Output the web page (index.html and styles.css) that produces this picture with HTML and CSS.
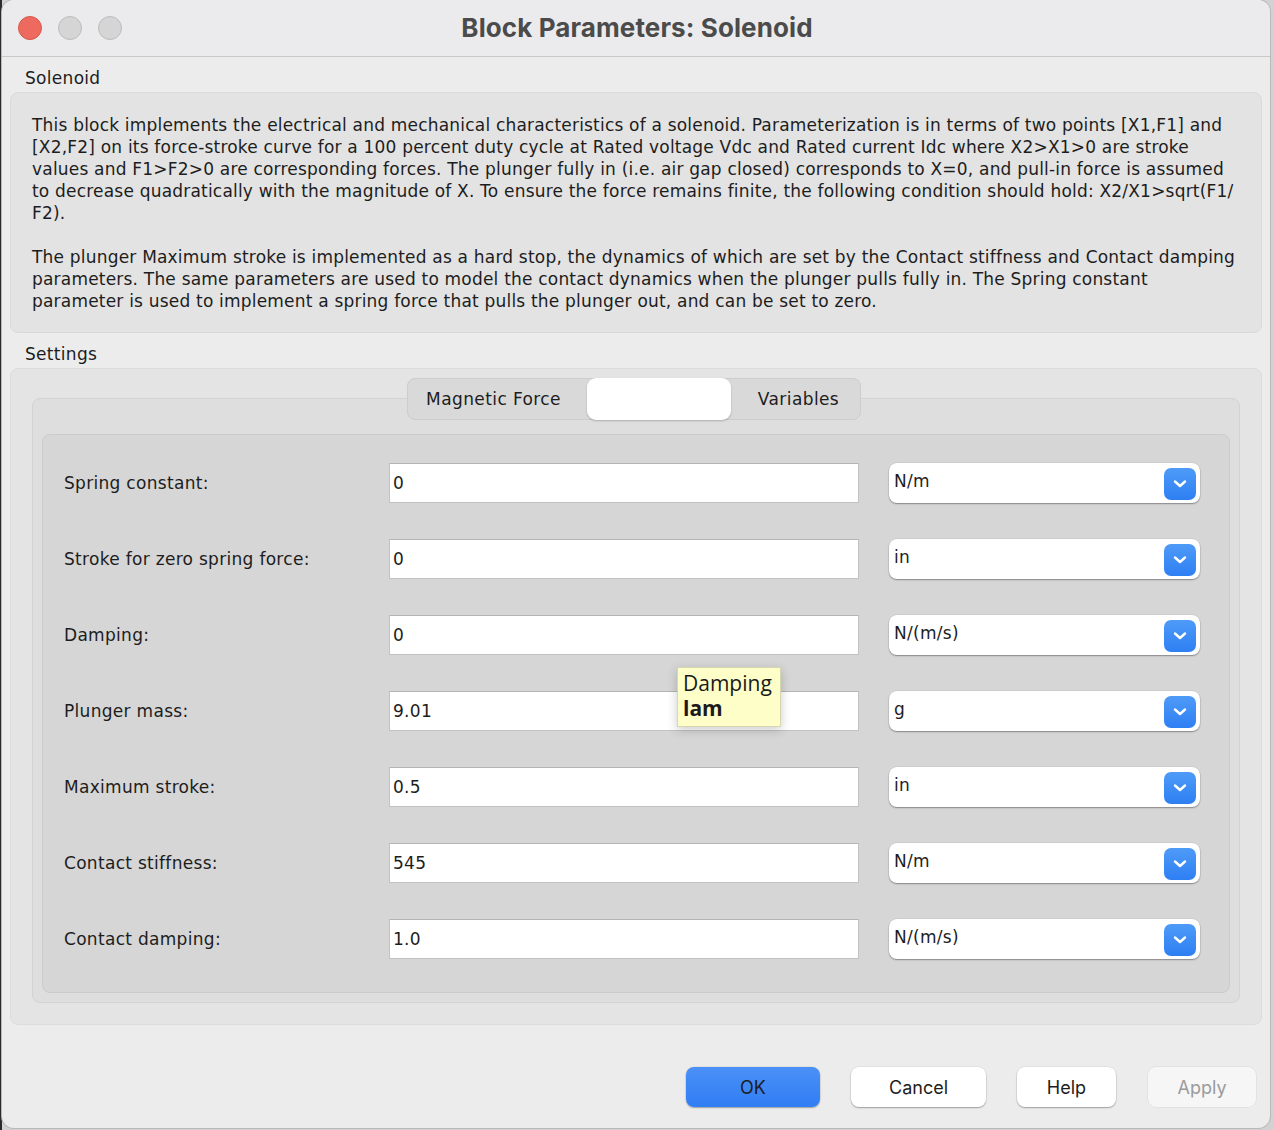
FILE: index.html
```html
<!DOCTYPE html>
<html>
<head>
<meta charset="utf-8">
<title>Block Parameters: Solenoid</title>
<link rel="stylesheet" href="styles.css">
</head>
<body>
<div class="desktop">
  <div class="window">
    <div class="titlebar">
      <div class="lights">
        <span class="light close"></span>
        <span class="light"></span>
        <span class="light"></span>
      </div>
      <div class="title">Block Parameters: Solenoid</div>
    </div>

    <div class="content">
      <div class="group-label">Solenoid</div>
      <div class="desc-box">
        <p class="desc">This block implements the electrical and mechanical characteristics of a solenoid. Parameterization is in terms of two points [X1,F1] and<br>[X2,F2] on its force-stroke curve for a 100 percent duty cycle at Rated voltage Vdc and Rated current Idc where X2&gt;X1&gt;0 are stroke<br>values and F1&gt;F2&gt;0 are corresponding forces. The plunger fully in (i.e. air gap closed) corresponds to X=0, and pull-in force is assumed<br>to decrease quadratically with the magnitude of X. To ensure the force remains finite, the following condition should hold: X2/X1&gt;sqrt(F1/<br>F2).</p>
        <p class="desc">The plunger Maximum stroke is implemented as a hard stop, the dynamics of which are set by the Contact stiffness and Contact damping<br>parameters. The same parameters are used to model the contact dynamics when the plunger pulls fully in. The Spring constant<br>parameter is used to implement a spring force that pulls the plunger out, and can be set to zero.</p>
      </div>

      <div class="group-label">Settings</div>
      <div class="settings-box">
        <div class="tabs">
          <div class="tab tab-first">Magnetic Force</div>
          <div class="tab tab-selected"></div>
          <div class="tab tab-last">Variables</div>
        </div>
        <div class="tab-panel">
          <div class="form">
            <div class="row">
              <div class="label">Spring constant:</div>
              <div class="input">0</div>
              <div class="select"><span class="select-text">N/m</span><span class="select-btn"><svg width="14" height="8" viewBox="0 0 14 8"><path d="M2 1.5 L7 6 L12 1.5" fill="none" stroke="#fff" stroke-width="2.4" stroke-linecap="round" stroke-linejoin="round"/></svg></span></div>
            </div>
            <div class="row">
              <div class="label">Stroke for zero spring force:</div>
              <div class="input">0</div>
              <div class="select"><span class="select-text">in</span><span class="select-btn"><svg width="14" height="8" viewBox="0 0 14 8"><path d="M2 1.5 L7 6 L12 1.5" fill="none" stroke="#fff" stroke-width="2.4" stroke-linecap="round" stroke-linejoin="round"/></svg></span></div>
            </div>
            <div class="row">
              <div class="label">Damping:</div>
              <div class="input">0</div>
              <div class="select"><span class="select-text">N/(m/s)</span><span class="select-btn"><svg width="14" height="8" viewBox="0 0 14 8"><path d="M2 1.5 L7 6 L12 1.5" fill="none" stroke="#fff" stroke-width="2.4" stroke-linecap="round" stroke-linejoin="round"/></svg></span></div>
            </div>
            <div class="row">
              <div class="label">Plunger mass:</div>
              <div class="input">9.01</div>
              <div class="select"><span class="select-text">g</span><span class="select-btn"><svg width="14" height="8" viewBox="0 0 14 8"><path d="M2 1.5 L7 6 L12 1.5" fill="none" stroke="#fff" stroke-width="2.4" stroke-linecap="round" stroke-linejoin="round"/></svg></span></div>
            </div>
            <div class="row">
              <div class="label">Maximum stroke:</div>
              <div class="input">0.5</div>
              <div class="select"><span class="select-text">in</span><span class="select-btn"><svg width="14" height="8" viewBox="0 0 14 8"><path d="M2 1.5 L7 6 L12 1.5" fill="none" stroke="#fff" stroke-width="2.4" stroke-linecap="round" stroke-linejoin="round"/></svg></span></div>
            </div>
            <div class="row">
              <div class="label">Contact stiffness:</div>
              <div class="input">545</div>
              <div class="select"><span class="select-text">N/m</span><span class="select-btn"><svg width="14" height="8" viewBox="0 0 14 8"><path d="M2 1.5 L7 6 L12 1.5" fill="none" stroke="#fff" stroke-width="2.4" stroke-linecap="round" stroke-linejoin="round"/></svg></span></div>
            </div>
            <div class="row">
              <div class="label">Contact damping:</div>
              <div class="input">1.0</div>
              <div class="select"><span class="select-text">N/(m/s)</span><span class="select-btn"><svg width="14" height="8" viewBox="0 0 14 8"><path d="M2 1.5 L7 6 L12 1.5" fill="none" stroke="#fff" stroke-width="2.4" stroke-linecap="round" stroke-linejoin="round"/></svg></span></div>
            </div>
          </div>
        </div>
      </div>

      <div class="buttons">
        <div class="btn btn-ok">OK</div>
        <div class="btn btn-cancel">Cancel</div>
        <div class="btn btn-help">Help</div>
        <div class="btn btn-apply">Apply</div>
      </div>
    </div>

    <div class="tooltip">Damping<br><b>lam</b></div>
  </div>
</div>
</body>
</html>
```

FILE: styles.css
```css
* { box-sizing: border-box; }

html, body {
  margin: 0;
  padding: 0;
}

body {
  background: linear-gradient(to right, #2b2b2b 0, #2b2b2b 2px, #d2d2d2 2px);
  font-family: "DejaVu Sans", sans-serif;
  color: #1d1d1d;
  width: 1274px;
  height: 1130px;
  overflow: hidden;
}

.desktop {
  padding-left: 2px;
}

.window {
  position: relative;
  width: 1268px;
  height: 1128px;
  background: #ececec;
  border-radius: 12px;
  overflow: hidden;
  box-shadow: 0 0 0 1px #b9b9b9;
}

.titlebar {
  position: relative;
  height: 57px;
  background: #ebebed;
  border-bottom: 1px solid #c8c8c8;
  display: flex;
  align-items: center;
  justify-content: center;
}

.lights {
  position: absolute;
  left: 16px;
  top: 16px;
  display: flex;
  gap: 16px;
}

.light {
  width: 24px;
  height: 24px;
  border-radius: 50%;
  background: #d5d5d5;
  border: 1px solid #bcbcbc;
}

.light.close {
  background: #ee6a5e;
  border-color: #d5574c;
}

.title {
  font-family: Inter, "Liberation Sans", sans-serif;
  font-weight: 700;
  font-size: 26px;
  letter-spacing: 0.1px;
  color: #4b4b4b;
  margin-top: -2px;
  margin-left: 2px;
}

.content {
  padding: 0 8px 0 8px;
}

.group-label {
  font-size: 17px;
  line-height: 22px;
  letter-spacing: 0.3px;
  padding: 10px 0 3px 15px;
}

.desc-box {
  background: #e3e3e3;
  border: 1px solid #dadada;
  border-radius: 8px;
  padding: 21px 10px 20px 21px;
}

.desc {
  margin: 0;
  font-size: 17px;
  line-height: 22px;
  letter-spacing: 0.2px;
  white-space: nowrap;
}

.desc + .desc {
  margin-top: 22px;
}

.settings-box {
  background: #e4e4e4;
  border: 1px solid #dcdcdc;
  border-radius: 8px;
  padding: 9px 21px 21px 21px;
  height: 657px;
}

.tabs {
  position: relative;
  z-index: 1;
  width: 454px;
  height: 42px;
  margin: 0 auto 0 auto;
  display: flex;
  background: #d9d9d9;
  border: 1px solid #cdcdcd;
  border-radius: 8px;
  transform: translateX(-2px);
}

.tab {
  font-size: 17px;
  letter-spacing: 0.4px;
  display: flex;
  align-items: center;
  justify-content: center;
  color: #1d1d1d;
}

.tab-first { width: 179px; padding-right: 8px; }
.tab-last { flex: 1; padding-left: 6px; }

.tab-selected {
  width: 144px;
  height: 42px;
  margin-top: -1px;
  background: #ffffff;
  border-radius: 9px;
  box-shadow: 0 1px 2px rgba(0,0,0,0.22);
}

.tab-panel {
  margin-top: -22px;
  background: #dedede;
  border: 1px solid #d3d3d3;
  border-radius: 8px;
  padding: 35px 9px 9px 9px;
}

.form {
  background: #d6d6d6;
  border: 1px solid #cbcbcb;
  border-radius: 8px;
  padding: 28px 29px 33px 21px;
  display: flex;
  flex-direction: column;
  gap: 36px;
}

.row {
  display: grid;
  grid-template-columns: 325px 470px 341px;
  height: 40px;
  align-items: center;
}

.row .select { margin-left: 30px; }

.label {
  font-size: 17px;
  letter-spacing: 0.3px;
  color: #1d1d1d;
}

.input {
  height: 40px;
  width: 470px;
  background: #ffffff;
  border: 1px solid #c2c2c2;
  border-top-color: #b5b5b5;
  font-size: 17px;
  letter-spacing: 0.3px;
  line-height: 38px;
  padding-left: 3px;
  color: #1d1d1d;
}

.select {
  position: relative;
  height: 40px;
  width: 311px;
  background: #ffffff;
  border-radius: 8px;
  box-shadow: 0 1px 1.5px rgba(0,0,0,0.35), 0 0 0 0.5px rgba(0,0,0,0.08);
  display: flex;
  align-items: center;
  justify-content: space-between;
  padding: 0 4px 0 5px;
}

.select-text {
  font-size: 17px;
  letter-spacing: 0.3px;
  margin-top: -5px;
  color: #1d1d1d;
}

.select-btn {
  width: 32px;
  height: 32px;
  border-radius: 7px;
  background: linear-gradient(#4e9bf8, #2e7ff3);
  display: flex;
  align-items: center;
  justify-content: center;
  margin-top: 1px;
}

.buttons {
  display: flex;
  justify-content: flex-end;
  gap: 31px;
  padding: 42px 6px 0 0;
}

.btn {
  height: 40px;
  border-radius: 8px;
  font-family: Inter, "Liberation Sans", sans-serif;
  font-size: 18px;
  display: flex;
  align-items: center;
  justify-content: center;
  background: #ffffff;
  color: #1d1d1d;
  box-shadow: 0 1px 1.5px rgba(0,0,0,0.3), 0 0 0 0.5px rgba(0,0,0,0.08);
}

.btn-ok {
  width: 134px;
  background: linear-gradient(#4a90f7, #307ef4);
}
.btn-cancel { width: 135px; }
.btn-help { width: 99px; margin-right: 1px; }
.btn-apply {
  width: 108px;
  background: #f6f6f6;
  color: #9b9b9b;
  box-shadow: 0 0 0 0.5px rgba(0,0,0,0.08);
}

.tooltip {
  position: absolute;
  left: 675px;
  top: 667px;
  width: 104px;
  height: 60px;
  background: #fefec9;
  border: 1px solid #d6d6b0;
  box-shadow: 0 3px 10px rgba(0,0,0,0.2);
  font-family: "Open Sans", "DejaVu Sans", sans-serif;
  font-size: 21px;
  line-height: 25px;
  padding: 3px 0 0 5px;
  color: #1a1a1a;
}
```
